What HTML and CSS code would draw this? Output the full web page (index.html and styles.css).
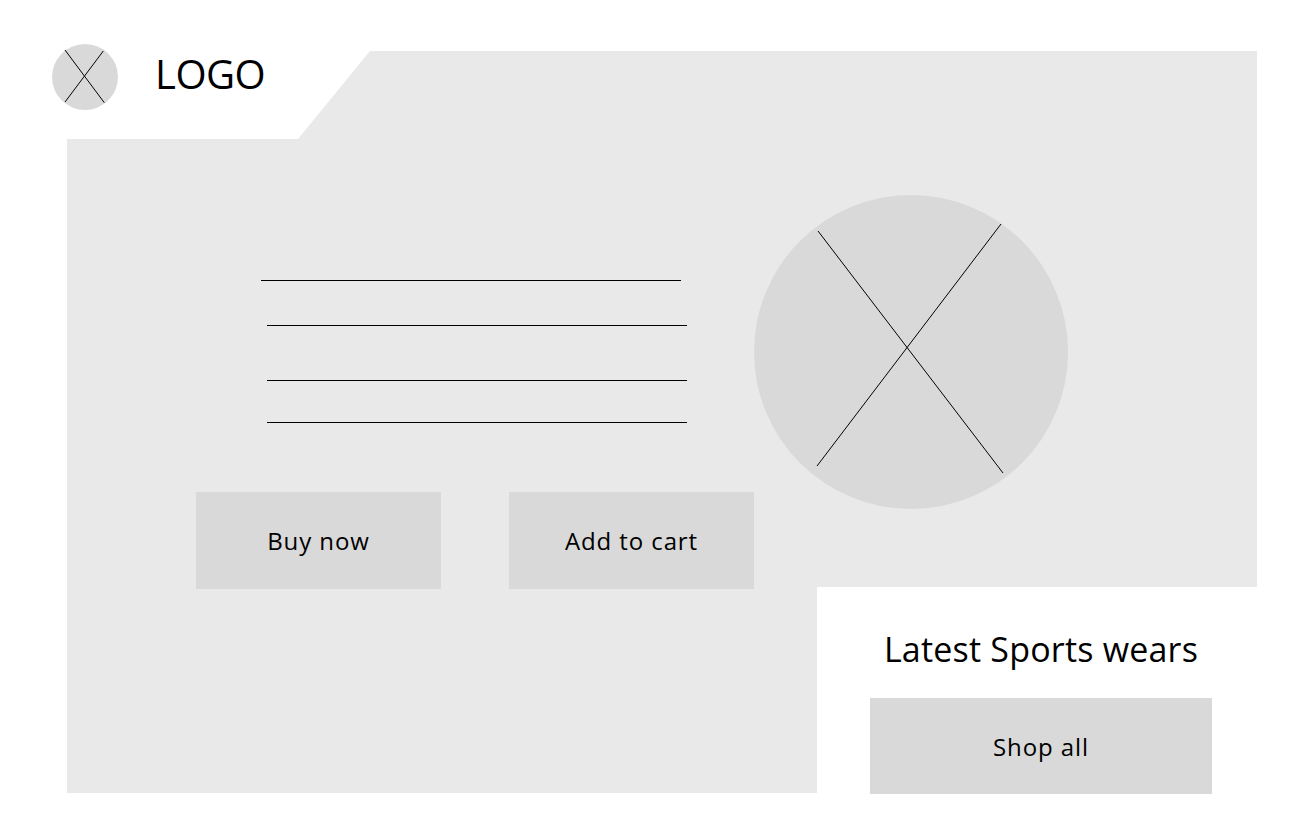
FILE: index.html
```html
<!DOCTYPE html>
<html lang="en">
<head>
<meta charset="utf-8">
<title>Sports store wireframe</title>
<link rel="stylesheet" href="styles.css">
</head>
<body>
<div class="canvas">
  <div class="backdrop"></div>

  <header class="header">
    <svg class="logo-mark" width="66" height="66" viewBox="0 0 66 66" aria-hidden="true">
      <circle cx="33" cy="33" r="33" fill="#d9d9d9"/>
      <line x1="13" y1="6" x2="52.3" y2="58.7" stroke="#000" stroke-width="1"/>
      <line x1="51.3" y1="7" x2="13" y2="58" stroke="#000" stroke-width="1"/>
    </svg>
    <span class="logo-text">LOGO</span>
  </header>

  <section class="hero">
    <div class="hero-left">
      <div class="lines">
        <div class="line line-1"></div>
        <div class="line line-2"></div>
        <div class="line line-3"></div>
        <div class="line line-4"></div>
      </div>
      <div class="actions">
        <button class="btn">Buy now</button>
        <button class="btn">Add to cart</button>
      </div>
    </div>
    <div class="hero-right">
      <svg class="hero-image" width="314" height="314" viewBox="0 0 314 314" aria-hidden="true">
        <circle cx="157" cy="157" r="157" fill="#d9d9d9"/>
        <line x1="64" y1="36" x2="249" y2="278" stroke="#000" stroke-width="1"/>
        <line x1="247" y1="29" x2="63" y2="271" stroke="#000" stroke-width="1"/>
      </svg>
    </div>
  </section>

  <section class="promo">
    <h2 class="promo-title">Latest Sports wears</h2>
    <button class="btn btn-wide">Shop all</button>
  </section>
</div>
</body>
</html>
```

FILE: styles.css
```css
* {
  box-sizing: border-box;
}

html, body {
  margin: 0;
  padding: 0;
  background: #ffffff;
}

body {
  font-family: "Open Sans", "Liberation Sans", sans-serif;
  color: #000;
}

.canvas {
  position: relative;
  width: 1310px;
  height: 826px;
  overflow: hidden;
}

.backdrop {
  position: absolute;
  inset: 0;
  background: #e9e9e9;
  clip-path: polygon(370px 51px, 1257px 51px, 1257px 587px, 817px 587px, 817px 793px, 67px 793px, 67px 139px, 298px 139px);
}

.header {
  position: relative;
  display: flex;
  align-items: center;
  height: 110px;
  padding: 44px 0 0 52px;
}

.logo-mark {
  display: block;
  flex: none;
}

.logo-text {
  margin-left: 37px;
  font-size: 40px;
  font-weight: 400;
  letter-spacing: -0.5px;
  line-height: 1;
  margin-top: -6px;
}

.hero {
  position: relative;
  display: flex;
  padding-left: 196px;
  height: 479px;
}

.hero-left {
  width: 558px;
  display: flex;
  flex-direction: column;
}

.lines {
  padding-top: 170px;
  padding-left: 65px;
}

.line {
  width: 420px;
  height: 1px;
  background: #000;
}

.line-2 {
  margin-top: 44px;
  margin-left: 6px;
}

.line-3 {
  margin-top: 54px;
  margin-left: 6px;
}

.line-4 {
  margin-top: 41px;
  margin-left: 6px;
}

.actions {
  display: flex;
  gap: 68px;
  margin-top: 69px;
}

.btn {
  width: 245px;
  height: 97px;
  border: 0;
  border-radius: 0;
  background: #d9d9d9;
  font-family: inherit;
  font-size: 24px;
  letter-spacing: 0.9px;
  color: #000;
  padding: 0;
}

.hero-right {
  padding-top: 85px;
}

.hero-image {
  display: block;
}

.promo {
  position: relative;
  width: 342px;
  margin-left: 870px;
  display: flex;
  flex-direction: column;
  align-items: center;
}

.promo-title {
  margin: 37px 0 0;
  font-size: 34px;
  font-weight: 400;
  letter-spacing: 0.2px;
  line-height: 46px;
  white-space: nowrap;
}

.btn-wide {
  width: 342px;
  height: 96px;
  margin-top: 26px;
}
```
